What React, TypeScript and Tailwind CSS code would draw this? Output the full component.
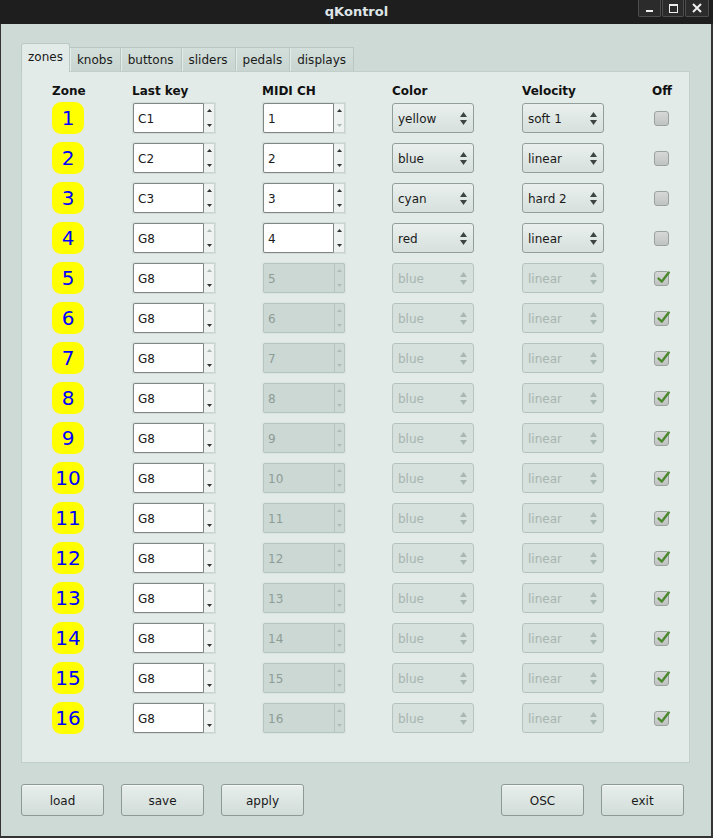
import React from "react";

const FONT = { fontFamily: '"DejaVu Sans", "Liberation Sans", sans-serif' };

type Row = { n: number; key: string; midi: number; color: string; vel: string; on: boolean };

const rows: Row[] = Array.from({ length: 16 }, (_, i) => {
  const n = i + 1;
  const keys = ["C1", "C2", "C3"];
  const colors = ["yellow", "blue", "cyan", "red"];
  const vels = ["soft 1", "linear", "hard 2", "linear"];
  return {
    n,
    key: keys[i] ?? "G8",
    midi: n,
    color: colors[i] ?? "blue",
    vel: vels[i] ?? "linear",
    on: i < 4,
  };
});

function Tri({ up, color }: { up: boolean; color: string }) {
  return (
    <svg width="5" height="3" viewBox="0 0 5 3">
      <polygon points={up ? "0,3 2.5,0 5,3" : "0,0 2.5,3 5,0"} fill={color} />
    </svg>
  );
}

function SpinBox({ value, enabled, upOff, downOff }: { value: string; enabled: boolean; upOff?: boolean; downOff?: boolean }) {
  if (!enabled) {
    return (
      <div className="flex h-[32px] w-[84px] bg-[#dbe4e0] p-px">
        <div className="flex flex-1 rounded-[2px] border border-[#b7c5c0] bg-[#cbd8d3]">
          <div className="flex flex-1 items-center pl-[4px] pt-px text-[12px] text-[#8e9c97]">{value}</div>
          <div className="flex w-[10px] flex-col items-center justify-between border-l border-[#b7c5c0] py-[5px]">
            <Tri up color="#aebcb7" />
            <Tri up={false} color="#aebcb7" />
          </div>
        </div>
      </div>
    );
  }
  return (
    <div className="flex h-[32px] w-[84px] bg-[#d3ddd9] p-px">
      <div className="flex flex-1 items-center rounded-l-[2px] border border-[#7f8683] bg-white pl-[4px] pt-px text-[12px] text-[#1a1a1a]">
        {value}
      </div>
      <div className="flex w-[11px] flex-col items-center justify-between border-y border-r border-[#c9d3cf] bg-[#eef3f1] py-[5px]">
        <Tri up color={upOff ? "#a9b5b1" : "#333"} />
        <Tri up={false} color={downOff ? "#a9b5b1" : "#333"} />
      </div>
    </div>
  );
}

function ComboArrows({ color }: { color: string }) {
  return (
    <svg width="7" height="13" viewBox="0 0 7 13">
      <polygon points="0,5 3.5,0 7,5" fill={color} />
      <polygon points="0,8 3.5,13 7,8" fill={color} />
    </svg>
  );
}

function Combo({ value, enabled }: { value: string; enabled: boolean }) {
  if (!enabled) {
    return (
      <div className="flex h-[30px] w-[82px] items-center justify-between rounded-[3px] border border-[#b5c3be] bg-[#d6e0dc] pl-[5px] pr-[6px] text-[12px] text-[#a6b5b0]">
        <span className="pt-[2px]">{value}</span>
        <ComboArrows color="#a9b8b3" />
      </div>
    );
  }
  return (
    <div className="flex h-[30px] w-[82px] items-center justify-between rounded-[3px] border border-[#929e9a] bg-gradient-to-b from-[#eaf0ee] to-[#d6e0dc] pl-[5px] pr-[6px] text-[12px] text-[#1a1a1a]">
      <span className="pt-[2px]">{value}</span>
      <ComboArrows color="#3e4442" />
    </div>
  );
}

function Check({ checked }: { checked: boolean }) {
  return (
    <div className="relative ml-[2px] h-[15px] w-[15px] rounded-[3px] border border-[#9aa19e] bg-gradient-to-b from-[#d6d8d7] to-[#bfc3c1]">
      {checked && (
        <svg className="absolute left-[1px] top-[-2px]" width="15" height="15" viewBox="0 0 15 15">
          <path d="M2.5 8.5 L5.8 11.6 L12.8 2.6" stroke="#4a8a2c" strokeWidth="2.4" fill="none" strokeLinecap="round" strokeLinejoin="round" />
        </svg>
      )}
    </div>
  );
}

function Btn({ label }: { label: string }) {
  return (
    <div className="flex h-[32px] w-[83px] items-center justify-center rounded-[3px] border border-[#8d9995] bg-gradient-to-b from-[#e8efec] to-[#d1dcd8] pt-[2px] text-[12px] text-[#1a1a1a] shadow-[inset_0_1px_0_#f4f8f6]">
      {label}
    </div>
  );
}

export default function App() {
  const tabs = ["knobs", "buttons", "sliders", "pedals", "displays"];
  return (
    <div style={FONT} className="flex h-[838px] w-[713px] flex-col overflow-hidden bg-[#1e1e1e]">
      {/* Title bar */}
      <div className="relative flex h-[24px] items-center justify-center bg-[#1e1e1e]">
        <span className="text-[13px] font-bold text-[#dfe5e8]">qKontrol</span>
        <div className="absolute right-[4px] top-0 flex gap-[1px]">
          <div className="flex h-[17px] w-[23px] items-end justify-center rounded-b-[2px] border border-t-0 border-[#4d4d4d] bg-[#2b2b2b] pb-[4px]">
            <div className="h-[2px] w-[7px] bg-[#eeeeee]" />
          </div>
          <div className="flex h-[17px] w-[22px] items-center justify-center rounded-b-[2px] border border-t-0 border-[#4d4d4d] bg-[#2b2b2b]">
            <div className="h-[9px] w-[9px] border border-t-2 border-[#eeeeee]" />
          </div>
          <div className="flex h-[17px] w-[24px] items-center justify-center rounded-b-[2px] border border-t-0 border-[#4d4d4d] bg-[#2b2b2b]">
            <svg width="10" height="10" viewBox="0 0 10 10">
              <path d="M1 1 L9 9 M9 1 L1 9" stroke="#eeeeee" strokeWidth="2" />
            </svg>
          </div>
        </div>
      </div>

      {/* Body */}
      <div className="flex flex-1 flex-col border-b-2 border-l border-r-2 border-[#343434] bg-[#cddad5] pl-[20px] pr-[21px] pt-[19px]">
        {/* Tabs */}
        <div className="flex h-[28px] items-end">
          <div className="relative z-10 -mb-px flex h-[29px] items-center rounded-t-[3px] border border-b-0 border-[#bcc8c4] bg-[#e3ebe8] px-[6px] pb-[2px] text-[12px] text-[#1a1a1a]">
            zones
          </div>
          {tabs.map((t) => (
            <div
              key={t}
              className="flex h-[24px] items-center border-r border-t border-[#b9c6c1] bg-gradient-to-b from-[#d3dfda] to-[#c8d5d0] px-[7px] pt-px text-[12px] text-[#1a1a1a] shadow-[inset_1px_0_0_#e4ece9]"
            >
              {t}
            </div>
          ))}
        </div>

        {/* Panel */}
        <div className="flex h-[692px] flex-col border border-[#c2cec9] bg-[#e3ebe8] pl-[30px] pt-[13px]">
          <div className="grid h-[13px] grid-cols-[80px_130px_130px_130px_130px_40px] text-[12px] font-bold leading-[13px] text-[#111]">
            <div>Zone</div>
            <div>Last key</div>
            <div>MIDI CH</div>
            <div>Color</div>
            <div>Velocity</div>
            <div>Off</div>
          </div>
          {rows.map((r) => (
            <div key={r.n} className="grid h-[40px] grid-cols-[80px_130px_130px_130px_130px_40px] items-center">
              <div>
                <div className="flex h-[32px] w-[32px] items-center justify-center rounded-[9px] bg-[#ffff00] text-[20px] leading-none text-[#0000ff]">
                  {r.n}
                </div>
              </div>
              <div>
                <SpinBox value={r.key} enabled upOff={r.key === "G8"} />
              </div>
              <div>
                <SpinBox value={String(r.midi)} enabled={r.on} downOff={r.midi === 1} />
              </div>
              <div>
                <Combo value={r.color} enabled={r.on} />
              </div>
              <div>
                <Combo value={r.vel} enabled={r.on} />
              </div>
              <div>
                <Check checked={!r.on} />
              </div>
            </div>
          ))}
        </div>

        {/* Buttons */}
        <div className="mt-[21px] flex pr-[6px]">
          <div className="flex gap-[17px]">
            <Btn label="load" />
            <Btn label="save" />
            <Btn label="apply" />
          </div>
          <div className="ml-auto flex gap-[17px]">
            <Btn label="OSC" />
            <Btn label="exit" />
          </div>
        </div>
      </div>
    </div>
  );
}
